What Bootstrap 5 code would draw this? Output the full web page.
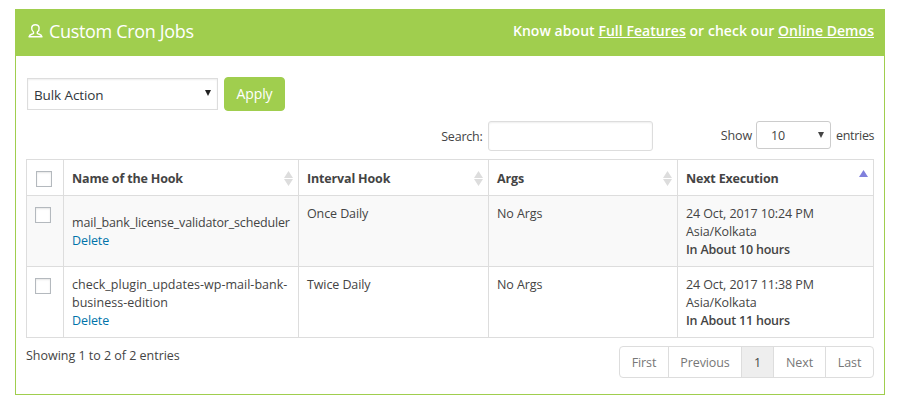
<!DOCTYPE html>
<html lang="en">
<head>
<meta charset="utf-8">
<meta name="viewport" content="width=device-width, initial-scale=1">
<title>Custom Cron Jobs</title>
<link href="https://cdn.jsdelivr.net/npm/bootstrap@5.3.0/dist/css/bootstrap.min.css" rel="stylesheet">
<style>
  body { font-family: "Open Sans", "Noto Sans", sans-serif; font-size: 12.5px; line-height: 18px; color: #444; background: #fff; overflow: hidden; letter-spacing: -.1px; }
  .portlet { width: 870px; height: 386px; margin: 9px 0 0 15px; border: 1px solid #a0ce4e; }
  .portlet-title { height: 46px; background: #a0ce4e; color: #fff; padding: 0 10px 3px 12px; }
  .portlet-title h1 { font-size: 18px; line-height: 24px; font-weight: 400; letter-spacing: -.33px; margin: 0 0 2px 6px; }
  .portlet-title svg { margin-bottom: 2px; }
  .portlet-title p { font-size: 14px; font-weight: 600; letter-spacing: .05px; padding-bottom: 2px; }
  .portlet-title a { color: #fff; }
  .portlet-body { padding: 21px 10px 0; }
  .bulk-select { width: 191px; height: 32px; margin: 1px 6px 1px 1px; padding: 1px 6px 0 6px; border: 1px solid #ddd; box-shadow: inset 0 1px 2px rgba(0,0,0,.07); color: #32373c; font-size: 13.5px; }
  .btn-apply { --bs-btn-color: #fff; --bs-btn-bg: #a0ce4e; --bs-btn-border-color: #a0ce4e; --bs-btn-hover-color: #fff; --bs-btn-hover-bg: #8fbd3d; width: 61px; height: 34px; padding: 0 0 1px; border-radius: 4px; font-size: 14px; letter-spacing: -.15px; }
  .filters { height: 48px; padding-top: 10px; }
  .filters span { padding-top: 1px; }
  .search-label { letter-spacing: -.2px; }
  .entries-label { width: 38px; letter-spacing: -.3px; }
  .search-box { width: 165px; height: 30px; padding: 0 8px; border: 1px solid #ddd; border-radius: 3px; box-shadow: inset 0 1px 2px rgba(0,0,0,.07); margin-left: 5px; margin-right: 68px; outline: 0; }
  .length-select { width: 75px; height: 28px; margin: 0 5px 0 4px; padding: 0 6px 0 14px; border: 1px solid #ccc; border-radius: 3px; }
  .caret-down { width: 6px; height: 6px; display: block; }
  .bulk-select .caret-down { margin-bottom: 3px; }
  .cron-table { width: 848px; table-layout: fixed; border-collapse: collapse; color: #444; margin: 0; }
  .cron-table > :not(caption) > * > * { border: 1px solid #ddd; padding: 9px 8px 7px; color: #444; box-shadow: none; }
  .cron-table thead th { height: 36px; font-weight: 700; letter-spacing: -.16px; }
  .cron-table tbody td { height: 71px; }
  .cron-table tbody tr:first-child td { background: #f9f9f9; }
  .cb { display: block; width: 16px; height: 16px; border: 1px solid #b4b9be; background: #fff; box-shadow: inset 0 1px 2px rgba(0,0,0,.1); appearance: none; margin: 2px 0 0; }
  thead .cb { margin: 1px 0 1px 1px; }
  .sort { width: 9px; height: 15px; margin: -2px -3px 0 0; }
  .sort-asc { margin-top: -4px; }
  .hook-tight { letter-spacing: -.165px; }
  .hook-wide { letter-spacing: .02px; }
  .cron-table a { color: #0073aa; text-decoration: none; }
  .cron-table strong { font-weight: 600; letter-spacing: -.2px; }
  .table-info-text { margin-top: 9px; letter-spacing: -.02px; }
  .pager-list { --bs-pagination-color: #777; --bs-pagination-border-color: #ddd; --bs-pagination-border-radius: 4px; --bs-pagination-padding-x: 0; --bs-pagination-padding-y: 7px; --bs-pagination-font-size: 12.5px; --bs-pagination-active-bg: #eee; --bs-pagination-active-color: #444; --bs-pagination-active-border-color: #ddd; margin: 8px 0 0; }
  .pager-list .page-link { text-align: center; height: 32px; padding-bottom: 5px; }
  .w-first { width: 50px; } .w-prev { width: 74px; } .w-num { width: 33px; } .w-next { width: 53px; } .w-last { width: 49px; }
</style>
</head>
<body>
<main class="portlet">
  <header class="portlet-title d-flex align-items-center justify-content-between">
    <div class="d-flex align-items-center">
      <svg width="15" height="14" viewBox="0 0 15 14" fill="none" stroke="#fff" stroke-width="1.4" stroke-linejoin="round"><path d="M5.500 8C4 7 3.500 5.400 3.700 3.700 3.900 1.800 5.500.8 7.400.8s3.500 1 3.700 2.900c.2 1.700-.3 3.300-1.800 4.300v1.500c1 .8 4.100.4 4.700 3.300H1c.6-2.900 3.500-2.500 4.500-3.300z"/></svg>
      <h1>Custom Cron Jobs</h1>
    </div>
    <p class="mb-0">Know about <a href="#">Full Features</a> or check our <a href="#">Online Demos</a></p>
  </header>
  <div class="portlet-body">
    <div class="d-flex">
      <div class="bulk-select d-flex align-items-center justify-content-between"><span>Bulk Action</span><svg class="caret-down" viewBox="0 0 6 6"><path d="M0 0h6L3 6z" fill="#222"/></svg></div>
      <button class="btn btn-apply" type="button">Apply</button>
    </div>
    <div class="filters d-flex align-items-start justify-content-end">
      <label class="d-flex align-items-center"><span class="search-label">Search:</span><input class="search-box" type="text" aria-label="Search"></label>
      <div class="d-flex align-items-center"><span>Show</span><div class="length-select d-flex align-items-center justify-content-between"><span>10</span><svg class="caret-down" viewBox="0 0 6 6"><path d="M0 0h6L3 6z" fill="#444"/></svg></div><span class="entries-label">entries</span></div>
    </div>
    <table class="table cron-table">
      <colgroup><col width="37"><col width="235"><col width="190"><col width="189"><col width="196"></colgroup>
      <thead>
        <tr>
          <th><input type="checkbox" class="cb" aria-label="Select all"></th>
          <th><div class="d-flex justify-content-between align-items-center"><span>Name of the Hook</span><svg class="sort" viewBox="0 0 9 15"><path d="M4.500 0L9 7H0zM0 8h9L4.500 15z" fill="#ddd"/></svg></div></th>
          <th><div class="d-flex justify-content-between align-items-center"><span>Interval Hook</span><svg class="sort" viewBox="0 0 9 15"><path d="M4.500 0L9 7H0zM0 8h9L4.500 15z" fill="#ddd"/></svg></div></th>
          <th><div class="d-flex justify-content-between align-items-center"><span>Args</span><svg class="sort" viewBox="0 0 9 15"><path d="M4.500 0L9 7H0zM0 8h9L4.500 15z" fill="#ddd"/></svg></div></th>
          <th><div class="d-flex justify-content-between align-items-center"><span>Next Execution</span><svg class="sort sort-asc" viewBox="0 0 9 15"><path d="M4.500 0L9 7H0z" fill="#8080dc"/></svg></div></th>
        </tr>
      </thead>
      <tbody>
        <tr>
          <td><input type="checkbox" class="cb" aria-label="Select"></td>
          <td class="align-middle text-nowrap"><span class="hook-tight">mail_bank_license_validator_scheduler</span><br><a href="#">Delete</a></td>
          <td>Once Daily</td>
          <td>No Args</td>
          <td>24 Oct, 2017 10:24 PM<br>Asia/Kolkata<br><strong>In About 10 hours</strong></td>
        </tr>
        <tr>
          <td><input type="checkbox" class="cb" aria-label="Select"></td>
          <td class="align-middle text-nowrap"><span class="hook-wide">check_plugin_updates-wp-mail-bank-<br>business-edition</span><br><a href="#">Delete</a></td>
          <td>Twice Daily</td>
          <td>No Args</td>
          <td>24 Oct, 2017 11:38 PM<br>Asia/Kolkata<br><strong>In About 11 hours</strong></td>
        </tr>
      </tbody>
    </table>
    <div class="d-flex justify-content-between align-items-start">
      <div class="table-info-text">Showing 1 to 2 of 2 entries</div>
      <ul class="pagination pager-list">
        <li class="page-item"><a class="page-link w-first" href="#">First</a></li>
        <li class="page-item"><a class="page-link w-prev" href="#">Previous</a></li>
        <li class="page-item active"><a class="page-link w-num" href="#">1</a></li>
        <li class="page-item"><a class="page-link w-next" href="#">Next</a></li>
        <li class="page-item"><a class="page-link w-last" href="#">Last</a></li>
      </ul>
    </div>
  </div>
</main>
<script src="https://cdn.jsdelivr.net/npm/bootstrap@5.3.0/dist/js/bootstrap.bundle.min.js"></script>
</body>
</html>
